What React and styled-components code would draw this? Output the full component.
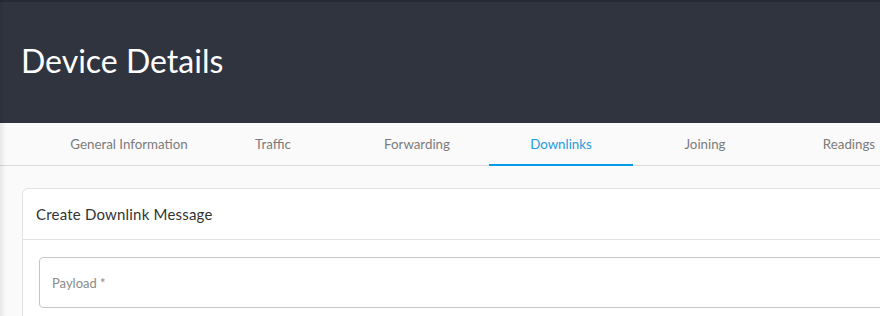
import React, { useState } from 'react'
import styled, { createGlobalStyle } from 'styled-components'

const GlobalStyle = createGlobalStyle`
    html, body {
        margin: 0;
        padding: 0;
        background: #fafafa;
        font-family: Lato, "Open Sans", sans-serif;
    }
`

const tabs = ['General Information', 'Traffic', 'Forwarding', 'Downlinks', 'Joining', 'Readings']

export default function App() {
    const [active, setActive] = useState('Downlinks')

    return (
        <Page>
            <GlobalStyle />
            <Header>
                <Title>Device Details</Title>
            </Header>
            <TabBar>
                {tabs.map(tab => (
                    <Tab key={tab} $active={tab === active} onClick={() => setActive(tab)}>
                        {tab}
                    </Tab>
                ))}
            </TabBar>
            <Content>
                <Card>
                    <CardHeader>Create Downlink Message</CardHeader>
                    <CardBody>
                        <Field>
                            <Input placeholder="Payload *" />
                        </Field>
                    </CardBody>
                </Card>
            </Content>
        </Page>
    )
}

const Page = styled.div`
    position: relative;
    width: 880px;
    height: 316px;
    overflow: hidden;
    background: #fafafa;

    &::before {
        content: '';
        position: absolute;
        top: 0;
        left: 0;
        bottom: 0;
        width: 6px;
        background: linear-gradient(to right, rgba(0, 0, 0, 0.08), rgba(0, 0, 0, 0));
        z-index: 2;
    }
`

const Header = styled.header`
    height: 123px;
    box-sizing: border-box;
    background: #30343f;
    border-top: 2px solid #272a33;
    display: flex;
    align-items: center;
    padding: 0 21px 4px;
`

const Title = styled.h1`
    margin: 0;
    color: #fff;
    font-size: 32px;
    font-weight: 400;
`

const TabBar = styled.nav`
    display: flex;
    height: 43px;
    box-sizing: border-box;
    padding-left: 57px;
    border-bottom: 1px solid #dcdcdc;
    background: #fafafa;
`

const Tab = styled.div`
    flex: 0 0 144px;
    display: flex;
    align-items: center;
    justify-content: center;
    font-size: 13.3px;
    color: ${p => (p.$active ? '#1e9be4' : '#7a7a7a')};
    border-bottom: 2px solid ${p => (p.$active ? '#039be5' : 'transparent')};
    margin-bottom: -1px;
    white-space: nowrap;
    cursor: pointer;
`

const Content = styled.main`
    padding: 22px 0 0 22px;
`

const Card = styled.section`
    width: 900px;
    background: #fff;
    border: 1px solid #e2e2e2;
    border-radius: 6px;
`

const CardHeader = styled.div`
    height: 51px;
    box-sizing: border-box;
    display: flex;
    align-items: center;
    padding: 0 13px;
    font-size: 15px;
    letter-spacing: 0.2px;
    color: #333;
    border-bottom: 1px solid #e2e2e2;
`

const CardBody = styled.div`
    padding: 17px 16px;
`

const Field = styled.div`
    display: flex;
`

const Input = styled.input`
    flex: 1;
    height: 51px;
    box-sizing: border-box;
    border: 1px solid #c6c6c6;
    border-radius: 4px;
    padding: 0 12px;
    font-family: inherit;
    font-size: 13px;
    color: #333;
    outline: none;

    &::placeholder {
        color: #8a8a8a;
    }
`
